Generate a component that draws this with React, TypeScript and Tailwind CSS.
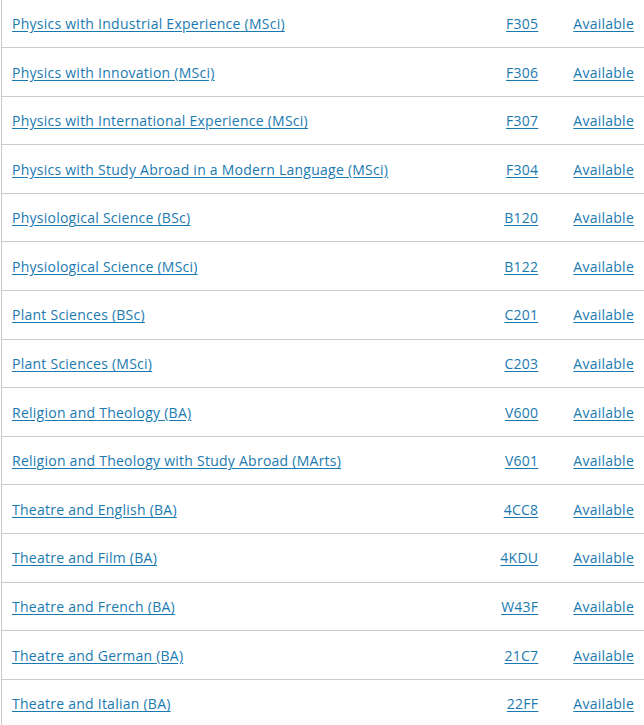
const ROWS: [string, string][] = [
  ['Physics with Industrial Experience (MSci)', 'F305'],
  ['Physics with Innovation (MSci)', 'F306'],
  ['Physics with International Experience (MSci)', 'F307'],
  ['Physics with Study Abroad in a Modern Language (MSci)', 'F304'],
  ['Physiological Science (BSc)', 'B120'],
  ['Physiological Science (MSci)', 'B122'],
  ['Plant Sciences (BSc)', 'C201'],
  ['Plant Sciences (MSci)', 'C203'],
  ['Religion and Theology (BA)', 'V600'],
  ['Religion and Theology with Study Abroad (MArts)', 'V601'],
  ['Theatre and English (BA)', '4CC8'],
  ['Theatre and Film (BA)', '4KDU'],
  ['Theatre and French (BA)', 'W43F'],
  ['Theatre and German (BA)', '21C7'],
  ['Theatre and Italian (BA)', '22FF'],
];

export default function App() {
  return (
    <div className="h-[725px] overflow-hidden bg-white font-['Open_Sans',sans-serif] text-[14px] leading-[19.6px] tracking-[0.25px] text-[#1a7ab0]">
      <div className="-mt-[0.6px] ml-px border-l border-[#cccccc]">
        {ROWS.map(([name, code]) => (
          <div key={code} className="flex items-center border-b border-[#cccccc] pt-[14.5px] pb-[13.5px]">
            <div className="flex-1 pl-[10px]">
              <a href="#" className="underline underline-offset-2">{name}</a>
            </div>
            <div className="w-[80px] text-right">
              <a href="#" className="underline underline-offset-2">{code}</a>
            </div>
            <div className="pl-[35px] pr-[10px]">
              <a href="#" className="underline underline-offset-2">Available</a>
            </div>
          </div>
        ))}
      </div>
    </div>
  );
}
